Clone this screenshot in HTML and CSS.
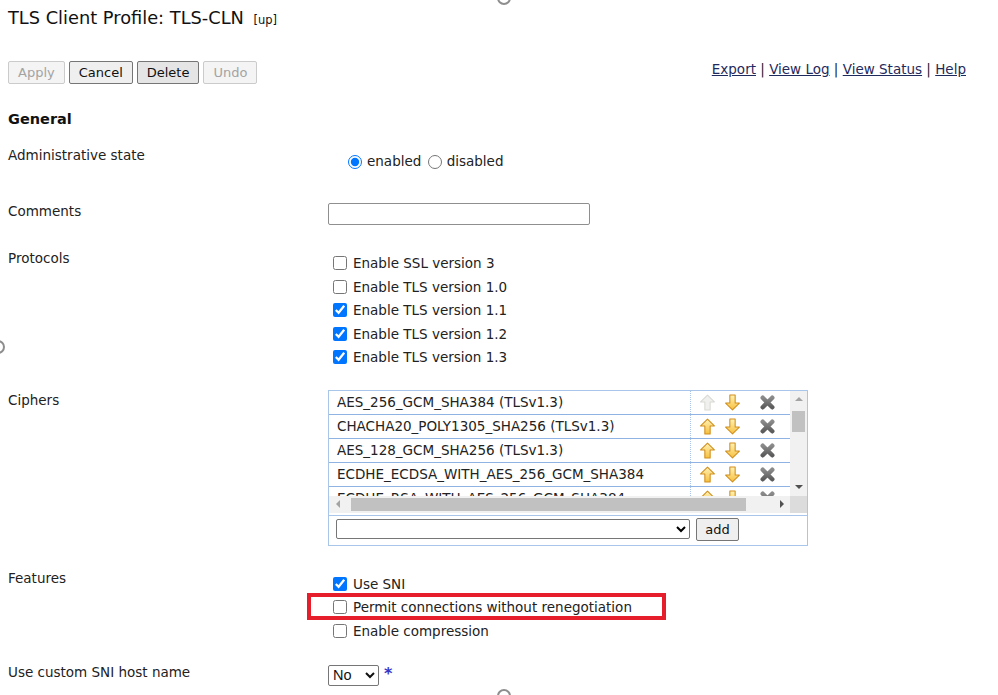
FILE: index.html
```html
<!DOCTYPE html>
<html lang="en">
<head>
  <meta charset="UTF-8">
  <title>TLS Client Profile</title>
  <link rel="stylesheet" href="styles.css">
</head>
<body>

  <svg class="defs" width="0" height="0" aria-hidden="true">
    <defs>
      <linearGradient id="gold" x1="0" y1="0" x2="0" y2="1">
        <stop offset="0" stop-color="#fff3b8"/>
        <stop offset="1" stop-color="#f6bf3e"/>
      </linearGradient>
      <linearGradient id="steel" x1="0" y1="0" x2="0" y2="1">
        <stop offset="0" stop-color="#8a8a8a"/>
        <stop offset="1" stop-color="#5c5c5c"/>
      </linearGradient>
      <symbol id="arrow-up" viewBox="0 0 16 16">
        <path d="M8 1 L14.5 7.5 H10.5 V15 H5.5 V7.5 H1.5 Z" stroke-linejoin="round"/>
      </symbol>
      <symbol id="arrow-down" viewBox="0 0 16 16">
        <path d="M8 15 L14.5 8.5 H10.5 V1 H5.5 V8.5 H1.5 Z" stroke-linejoin="round"/>
      </symbol>
      <symbol id="remove" viewBox="0 0 16 16">
        <path d="M3.5 3.5 L12.5 12.5 M12.5 3.5 L3.5 12.5" stroke="url(#steel)" stroke-width="4.2" stroke-linecap="round" fill="none"/>
      </symbol>
    </defs>
  </svg>

  <div class="page">
    <h1 class="title">TLS Client Profile: TLS-CLN <span class="state">[up]</span></h1>

    <div class="toolbar">
      <div class="buttons">
        <button disabled>Apply</button>
        <button>Cancel</button>
        <button class="pressed">Delete</button>
        <button disabled>Undo</button>
      </div>
      <div class="links">
        <a href="#">Export</a> | <a href="#">View Log</a> | <a href="#">View Status</a> | <a href="#">Help</a>
      </div>
    </div>

    <h2 class="section">General</h2>

    <div class="row row-admin">
      <div class="label">Administrative state</div>
      <div class="value radios">
        <label><input type="radio" name="admin" checked>enabled</label>
        <label><input type="radio" name="admin">disabled</label>
      </div>
    </div>

    <div class="row row-comments">
      <div class="label">Comments</div>
      <div class="value"><input type="text" class="text-input"></div>
    </div>

    <div class="row row-protocols">
      <div class="label">Protocols</div>
      <div class="value checks">
        <label><input type="checkbox">Enable SSL version 3</label>
        <label><input type="checkbox">Enable TLS version 1.0</label>
        <label><input type="checkbox" checked>Enable TLS version 1.1</label>
        <label><input type="checkbox" checked>Enable TLS version 1.2</label>
        <label><input type="checkbox" checked>Enable TLS version 1.3</label>
      </div>
    </div>

    <div class="row row-ciphers">
      <div class="label">Ciphers</div>
      <div class="value">
        <div class="cipher-box">
          <div class="cipher-view">
            <div class="cipher-rows">
              <div class="cipher-row"><div class="cipher-name">AES_256_GCM_SHA384 (TLSv1.3)</div><div class="cipher-tools"><svg class="ico up off"><use href="#arrow-up"/></svg><svg class="ico down"><use href="#arrow-down"/></svg><svg class="ico del"><use href="#remove"/></svg></div></div>
              <div class="cipher-row"><div class="cipher-name">CHACHA20_POLY1305_SHA256 (TLSv1.3)</div><div class="cipher-tools"><svg class="ico up"><use href="#arrow-up"/></svg><svg class="ico down"><use href="#arrow-down"/></svg><svg class="ico del"><use href="#remove"/></svg></div></div>
              <div class="cipher-row"><div class="cipher-name">AES_128_GCM_SHA256 (TLSv1.3)</div><div class="cipher-tools"><svg class="ico up"><use href="#arrow-up"/></svg><svg class="ico down"><use href="#arrow-down"/></svg><svg class="ico del"><use href="#remove"/></svg></div></div>
              <div class="cipher-row"><div class="cipher-name">ECDHE_ECDSA_WITH_AES_256_GCM_SHA384</div><div class="cipher-tools"><svg class="ico up"><use href="#arrow-up"/></svg><svg class="ico down"><use href="#arrow-down"/></svg><svg class="ico del"><use href="#remove"/></svg></div></div>
              <div class="cipher-row"><div class="cipher-name">ECDHE_RSA_WITH_AES_256_GCM_SHA384</div><div class="cipher-tools"><svg class="ico up"><use href="#arrow-up"/></svg><svg class="ico down"><use href="#arrow-down"/></svg><svg class="ico del"><use href="#remove"/></svg></div></div>
              <div class="cipher-row"><div class="cipher-name">ECDHE_ECDSA_WITH_AES_128_GCM_SHA256</div><div class="cipher-tools"><svg class="ico up"><use href="#arrow-up"/></svg><svg class="ico down"><use href="#arrow-down"/></svg><svg class="ico del"><use href="#remove"/></svg></div></div>
            </div>
            <div class="vscroll">
              <div class="sb-btn"><span class="tri tri-up off"></span></div>
              <div class="vtrack"><div class="vthumb"></div></div>
              <div class="sb-btn"><span class="tri tri-down"></span></div>
            </div>
            <div class="hscroll">
              <div class="sb-btn"><span class="tri tri-left off"></span></div>
              <div class="htrack"><div class="hthumb"></div></div>
              <div class="sb-btn"><span class="tri tri-right"></span></div>
            </div>
            <div class="corner"></div>
          </div>
          <div class="cipher-add">
            <select class="cipher-select"><option></option></select>
            <button>add</button>
          </div>
        </div>
      </div>
    </div>

    <div class="row row-features">
      <div class="label">Features</div>
      <div class="value checks">
        <label><input type="checkbox" checked>Use SNI</label>
        <label class="marked"><input type="checkbox">Permit connections without renegotiation<span class="highlight"></span></label>
        <label><input type="checkbox">Enable compression</label>
      </div>
    </div>

    <div class="row">
      <div class="label">Use custom SNI host name</div>
      <div class="value">
        <select class="small-select"><option>No</option><option>Yes</option></select><span class="required">*</span>
      </div>
    </div>
  </div>

  <span class="handle handle-top"></span>
  <span class="handle handle-left"></span>
  <span class="handle handle-bottom"></span>

</body>
</html>
```

FILE: styles.css
```css
html, body {
  height: 100%;
  overflow: hidden;
}

body {
  margin: 0;
  background-color: #fff;
  color: #222;
  font-family: "DejaVu Sans", Verdana, sans-serif;
  font-size: 13.5px;
  position: relative;
}

.defs {
  position: absolute;
}

.page {
  padding: 0 8px;
}

.title {
  margin: 7px 0 0;
  font-size: 17.8px;
  font-weight: normal;
  line-height: 22px;
  color: #111;
}

.title .state {
  font-size: 11.5px;
  margin-left: 4px;
}

.toolbar {
  display: flex;
  justify-content: space-between;
  align-items: flex-start;
  margin-top: 30px;
  padding-right: 24px;
}

.buttons {
  display: flex;
  gap: 4px;
}

button {
  font-family: "DejaVu Sans", Verdana, sans-serif;
  font-size: 13px;
  color: #111;
  height: 23px;
  padding: 0 9px;
  border: 1px solid #767676;
  border-radius: 2px;
  background-color: #efefef;
}

button.pressed {
  background-color: #e5e5e5;
}

button:disabled {
  color: #a3a3a3;
  border-color: #cbcbcb;
  background-color: #f4f4f4;
}

.links {
  color: #222;
  line-height: 16px;
}

.links a {
  color: #1f2a5c;
}

.section {
  margin: 26px 0 0;
  font-size: 14.5px;
  line-height: 18px;
  color: #111;
}

.row {
  display: flex;
  padding-bottom: 23px;
}

.section + .row {
  margin-top: 19px;
}

.label {
  width: 320px;
  flex: none;
  line-height: 16px;
}

.value {
  flex: 1;
}

.radios {
  padding: 6px 0 11px 18px;
  line-height: 16px;
}

.radios input {
  width: 14px;
  height: 14px;
  margin: 0 5px 0 2px;
  vertical-align: -3px;
}

.row-comments {
  padding-bottom: 25px;
}

.text-input {
  width: 262px;
  height: 22px;
  box-sizing: border-box;
  border: 1px solid #8f8f8f;
  border-radius: 2px;
  margin: 0;
}

.checks label {
  display: block;
  line-height: 23.5px;
}

.checks input {
  width: 14px;
  height: 14px;
  margin: 0 6px 0 5px;
  vertical-align: -2px;
}

.row-protocols .checks {
  padding-top: 2px;
}

.row-protocols {
  padding-bottom: 22px;
}

.row-ciphers {
  padding-bottom: 24px;
}

.row-features .checks {
  padding-top: 3px;
}

.row-features {
  padding-bottom: 21px;
}

/* cipher list */

.cipher-box {
  width: 478px;
  margin-top: -2px;
  border: 1px solid #a9c6ea;
}

.cipher-view {
  display: grid;
  grid-template-columns: 1fr 17px;
  grid-template-rows: 105px 17px;
}

.cipher-rows {
  overflow: hidden;
}

.cipher-row {
  display: flex;
  height: 23px;
  border-bottom: 1px solid #8fb4e3;
}

.cipher-name {
  width: 353px;
  flex: none;
  padding-left: 8px;
  line-height: 23px;
  white-space: nowrap;
  overflow: hidden;
  border-right: 1px dotted #a9c6ea;
}

.cipher-tools {
  display: flex;
  align-items: center;
  padding-left: 8px;
}

.ico {
  width: 17px;
  height: 17px;
}

.ico.up,
.ico.down {
  fill: url(#gold);
  stroke: #d18f1f;
  stroke-width: 1;
  margin-right: 8px;
}

.ico.up.off {
  fill: #f0f0ee;
  stroke: #d8d8d4;
}

.ico.del {
  margin-left: 10px;
}

.vscroll {
  display: flex;
  flex-direction: column;
  background-color: #f1f1f1;
}

.hscroll {
  display: flex;
  background-color: #f1f1f1;
}

.corner {
  background-color: #dcdcdc;
}

.sb-btn {
  width: 17px;
  height: 17px;
  flex: none;
  display: flex;
  align-items: center;
  justify-content: center;
}

.vtrack {
  flex: 1;
  padding: 3px 2px;
}

.vthumb {
  height: 21px;
  background-color: #c1c1c1;
}

.htrack {
  flex: 1;
  padding: 2px 0 2px 5px;
}

.hthumb {
  width: 395px;
  height: 13px;
  background-color: #c1c1c1;
}

.tri {
  width: 0;
  height: 0;
  border: 4px solid transparent;
}

.tri-up {
  border-bottom-color: #505050;
  border-top-width: 0;
}

.tri-down {
  border-top-color: #505050;
  border-bottom-width: 0;
}

.tri-left {
  border-right-color: #505050;
  border-left-width: 0;
}

.tri-right {
  border-left-color: #505050;
  border-right-width: 0;
}

.tri-up.off {
  border-bottom-color: #a3a3a3;
}

.tri-left.off {
  border-right-color: #a3a3a3;
}

.cipher-add {
  display: flex;
  align-items: center;
  gap: 6px;
  margin-top: 2px;
  border-top: 1px solid #a9c6ea;
  padding: 2px 0 4px 7px;
}

.cipher-select {
  width: 354px;
  height: 20px;
  border: 1px solid #767676;
  border-radius: 2px;
  background-color: #fff;
  font-family: "Liberation Sans", Arial, sans-serif;
  font-size: 13px;
}

.cipher-add button {
  width: 43px;
  padding: 0;
}

/* features */

.marked {
  position: relative;
}

.highlight {
  position: absolute;
  left: -21px;
  top: -3px;
  width: 359px;
  height: 27px;
  box-sizing: border-box;
  border: 4px solid #e61e2b;
}

.small-select {
  width: 51px;
  height: 21px;
  border: 1px solid #767676;
  border-radius: 2px;
  background-color: #fff;
  font-family: "Liberation Sans", Arial, sans-serif;
  font-size: 14.5px;
  color: #111;
}

.required {
  color: #3535c8;
  font-weight: bold;
  font-size: 16px;
  margin-left: 5px;
  vertical-align: 1px;
}

/* screenshot handles */

.handle {
  position: absolute;
  width: 10px;
  height: 10px;
  border: 2px solid #8e8e8e;
  border-radius: 50%;
  background-color: #fff;
}

.handle-top {
  left: 497px;
  top: -9px;
}

.handle-left {
  left: -9px;
  top: 340px;
}

.handle-bottom {
  left: 497px;
  top: 689px;
}
```
